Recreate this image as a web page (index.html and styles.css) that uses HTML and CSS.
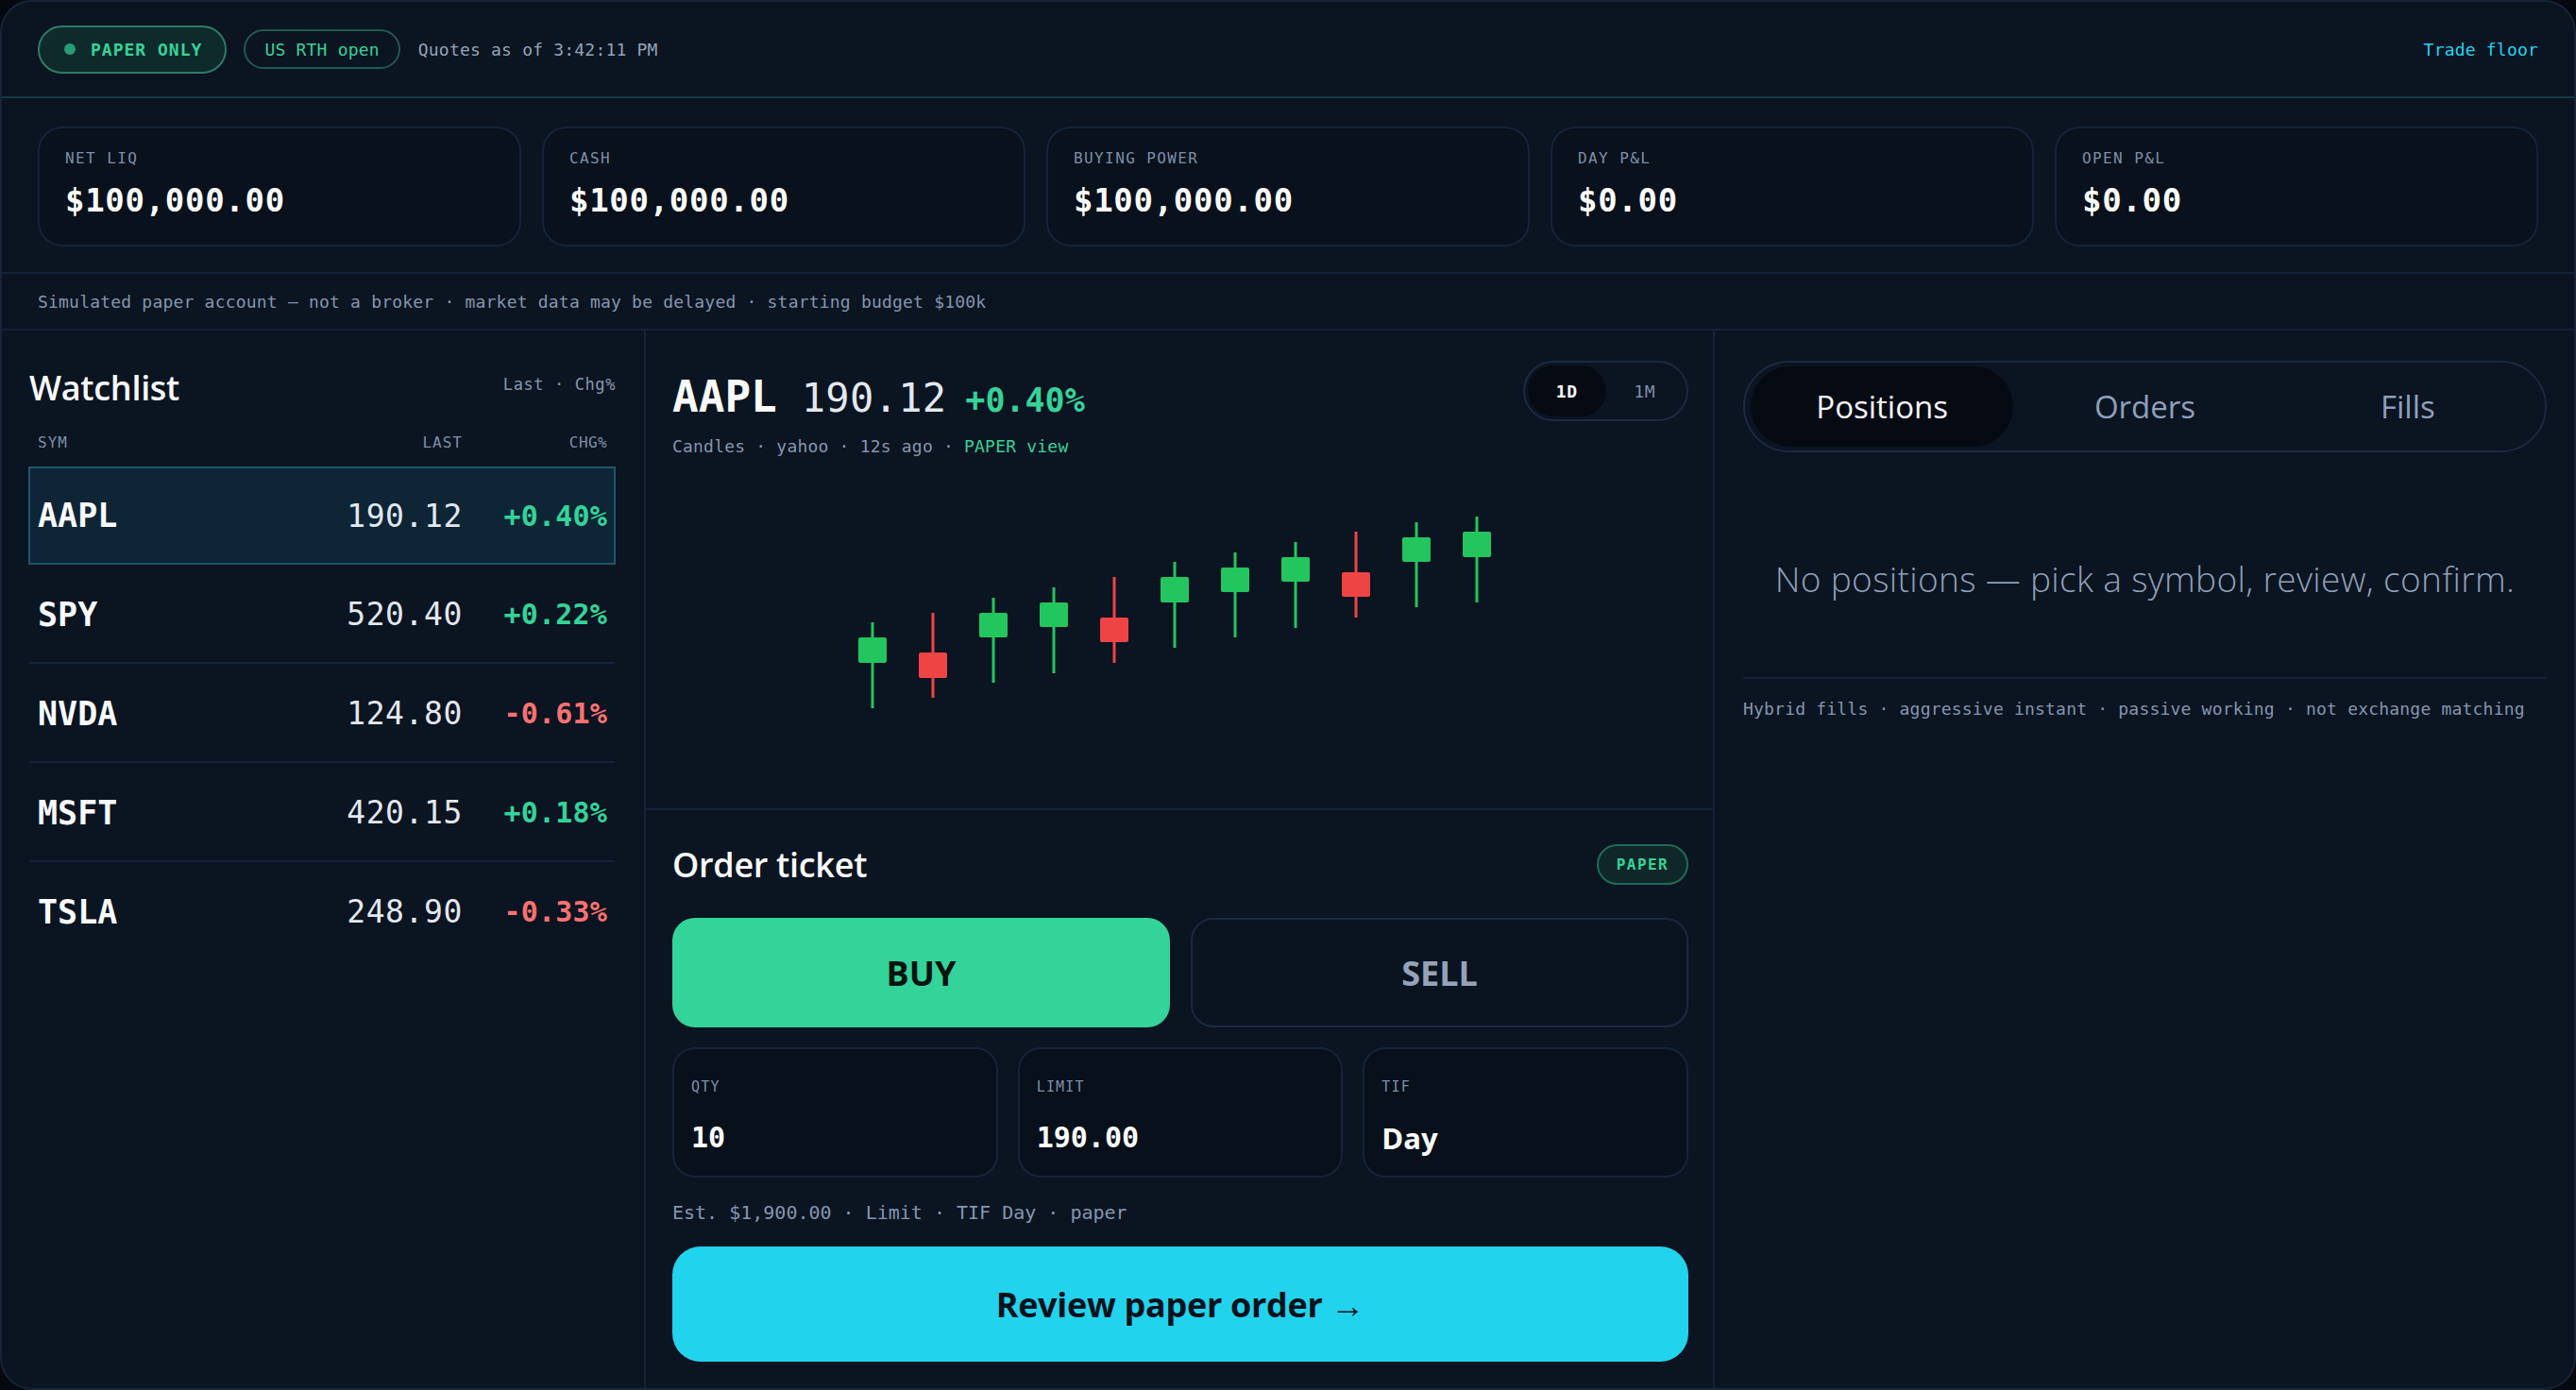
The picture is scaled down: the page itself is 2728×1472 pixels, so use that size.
FILE: index.html
```html
<!DOCTYPE html>
<html lang="en">
<head>
<meta charset="utf-8">
<title>Trade floor — paper desk</title>
<link rel="stylesheet" href="styles.css">
</head>
<body>
<div class="frame">
  <header class="topbar">
    <div class="topbar-left">
      <span class="pill pill-paper"><span class="pill-dot"></span>PAPER ONLY</span>
      <span class="pill pill-session">US RTH open</span>
      <span class="asof">Quotes as of 3:42:11 PM</span>
    </div>
    <a class="floor-link" href="#">Trade floor</a>
  </header>

  <section class="kpis">
    <div class="kpi"><div class="kpi-label">NET LIQ</div><div class="kpi-value">$100,000.00</div></div>
    <div class="kpi"><div class="kpi-label">CASH</div><div class="kpi-value">$100,000.00</div></div>
    <div class="kpi"><div class="kpi-label">BUYING POWER</div><div class="kpi-value">$100,000.00</div></div>
    <div class="kpi"><div class="kpi-label">DAY P&amp;L</div><div class="kpi-value">$0.00</div></div>
    <div class="kpi"><div class="kpi-label">OPEN P&amp;L</div><div class="kpi-value">$0.00</div></div>
  </section>

  <div class="disclaimer">Simulated paper account — not a broker · market data may be delayed · starting budget $100k</div>

  <main class="desk">
    <aside class="watch">
      <div class="watch-head">
        <h2 class="panel-title">Watchlist</h2>
        <span class="watch-hint">Last · Chg%</span>
      </div>
      <div class="watch-cols">
        <span>SYM</span><span class="num">LAST</span><span class="num">CHG%</span>
      </div>
      <div class="watch-row is-active">
        <span class="sym">AAPL</span><span class="last">190.12</span><span class="chg up">+0.40%</span>
      </div>
      <div class="watch-row">
        <span class="sym">SPY</span><span class="last">520.40</span><span class="chg up">+0.22%</span>
      </div>
      <div class="watch-row">
        <span class="sym">NVDA</span><span class="last">124.80</span><span class="chg down">-0.61%</span>
      </div>
      <div class="watch-row">
        <span class="sym">MSFT</span><span class="last">420.15</span><span class="chg up">+0.18%</span>
      </div>
      <div class="watch-row last-row">
        <span class="sym">TSLA</span><span class="last">248.90</span><span class="chg down">-0.33%</span>
      </div>
    </aside>

    <section class="center">
      <div class="chart-panel">
        <div class="quote-row">
          <div class="quote">
            <span class="q-sym">AAPL</span><span class="q-last">190.12</span><span class="q-chg">+0.40%</span>
          </div>
          <div class="range">
            <button class="range-btn is-on">1D</button>
            <button class="range-btn">1M</button>
          </div>
        </div>
        <div class="chart-meta">Candles · yahoo · 12s ago · <span class="tag-green">PAPER view</span></div>
        <svg class="candles" width="1076" height="352" viewBox="712 492 1076 352">
          <g class="bull">
            <rect x="922.5" y="659" width="3" height="91"/><rect x="909" y="675" width="30" height="27" rx="2"/>
            <rect x="1050.5" y="633" width="3" height="90"/><rect x="1037" y="649" width="30" height="26" rx="2"/>
            <rect x="1114.5" y="622" width="3" height="91"/><rect x="1101" y="638" width="30" height="26" rx="2"/>
            <rect x="1242.5" y="595" width="3" height="91"/><rect x="1229" y="611" width="30" height="27" rx="2"/>
            <rect x="1306.5" y="585" width="3" height="90"/><rect x="1293" y="601" width="30" height="26" rx="2"/>
            <rect x="1370.5" y="574" width="3" height="91"/><rect x="1357" y="590" width="30" height="26" rx="2"/>
            <rect x="1498.5" y="553" width="3" height="90"/><rect x="1485" y="569" width="30" height="26" rx="2"/>
            <rect x="1562.5" y="547" width="3" height="91"/><rect x="1549" y="563" width="30" height="27" rx="2"/>
          </g>
          <g class="bear">
            <rect x="986.5" y="649" width="3" height="90"/><rect x="973" y="691" width="30" height="27" rx="2"/>
            <rect x="1178.5" y="611" width="3" height="91"/><rect x="1165" y="654" width="30" height="26" rx="2"/>
            <rect x="1434.5" y="563" width="3" height="91"/><rect x="1421" y="606" width="30" height="26" rx="2"/>
          </g>
        </svg>
      </div>

      <div class="ticket">
        <div class="ticket-head">
          <h2 class="panel-title">Order ticket</h2>
          <span class="badge-paper">PAPER</span>
        </div>
        <div class="side-row">
          <button class="side side-buy">BUY</button>
          <button class="side side-sell">SELL</button>
        </div>
        <div class="fields">
          <div class="field"><div class="field-label">QTY</div><div class="field-value">10</div></div>
          <div class="field"><div class="field-label">LIMIT</div><div class="field-value">190.00</div></div>
          <div class="field"><div class="field-label">TIF</div><div class="field-value field-sans">Day</div></div>
        </div>
        <div class="estimate">Est. $1,900.00 · Limit · TIF Day · paper</div>
        <button class="review">Review paper order →</button>
      </div>
    </section>

    <section class="blotter">
      <div class="tabs">
        <button class="tab is-on">Positions</button>
        <button class="tab">Orders</button>
        <button class="tab">Fills</button>
      </div>
      <p class="empty">No positions — pick a symbol, review, confirm.</p>
      <div class="blotter-rule"></div>
      <p class="fill-note">Hybrid fills · aggressive instant · passive working · not exchange matching</p>
    </section>
  </main>
</div>
</body>
</html>
```

FILE: styles.css
```css
* { box-sizing: border-box; }

html, body {
  margin: 0;
  padding: 0;
}

body {
  width: 2728px;
  height: 1472px;
  background: #05080e;
  font-family: "Open Sans", "Noto Sans", sans-serif;
  color: #e6edf6;
  overflow: hidden;
}

button {
  font: inherit;
  color: inherit;
  background: none;
  border: 0;
  padding: 0;
  cursor: pointer;
}

h2, p { margin: 0; }

.frame {
  width: 2728px;
  height: 1472px;
  border: 2px solid #182539;
  border-radius: 34px;
  background: #0b1421;
  overflow: hidden;
  display: flex;
  flex-direction: column;
}

/* ---------- top bar ---------- */
.topbar {
  flex: none;
  height: 102px;
  padding: 0 38px;
  display: flex;
  align-items: center;
  justify-content: space-between;
  border-bottom: 2px solid #173a42;
  font-family: "DejaVu Sans Mono", monospace;
  font-size: 18px;
  letter-spacing: 0.2px;
}

.topbar-left {
  display: flex;
  align-items: center;
}

.pill {
  display: inline-flex;
  align-items: center;
  border-radius: 999px;
  color: #34d399;
  white-space: nowrap;
}

.pill-paper {
  height: 51px;
  padding: 0 24px 0 26px;
  border: 2px solid #2b7d66;
  background: #0f2a2b;
  font-weight: 700;
  letter-spacing: 1px;
}

.pill-dot {
  width: 12px;
  height: 12px;
  border-radius: 50%;
  background: #2a9b77;
  margin-right: 16px;
}

.pill-session {
  height: 42px;
  margin-left: 18px;
  padding: 0 20px;
  border: 2px solid #1f5a4f;
}

.asof {
  margin-left: 19px;
  color: #94a3b8;
}

.floor-link {
  color: #22d3ee;
  text-decoration: none;
}

/* ---------- account figures ---------- */
.kpis {
  flex: none;
  display: grid;
  grid-template-columns: repeat(5, 1fr);
  gap: 22px;
  padding: 30px 38px 27px;
  border-bottom: 2px solid #15223a;
}

.kpi {
  height: 127px;
  padding: 22px 27px 0;
  border: 2px solid #16233a;
  border-radius: 26px;
  background: #08111c;
  font-family: "DejaVu Sans Mono", monospace;
}

.kpi-label {
  font-size: 16px;
  line-height: 19px;
  letter-spacing: 1.4px;
  color: #7e8fa8;
}

.kpi-value {
  margin-top: 15px;
  font-size: 34px;
  line-height: 40px;
  font-weight: 700;
  letter-spacing: 0.7px;
  color: #ffffff;
}

.disclaimer {
  flex: none;
  height: 60px;
  padding: 0 38px;
  display: flex;
  align-items: center;
  border-bottom: 2px solid #15223a;
  font-family: "DejaVu Sans Mono", monospace;
  font-size: 18px;
  letter-spacing: 0.2px;
  color: #8596ae;
}

/* ---------- desk ---------- */
.desk {
  flex: 1;
  display: grid;
  grid-template-columns: 682px 1132px 1fr;
  min-height: 0;
}

.panel-title {
  font-size: 36px;
  line-height: 46px;
  font-weight: 600;
  color: #f8fafc;
  letter-spacing: -0.3px;
}

/* watchlist */
.watch {
  padding: 38px 30px 0 28px;
  border-right: 2px solid #15223a;
}

.watch-head {
  display: flex;
  align-items: center;
  justify-content: space-between;
  padding-left: 1px;
}

.watch-hint {
  font-family: "DejaVu Sans Mono", monospace;
  font-size: 17px;
  letter-spacing: 0.6px;
  color: #8596ae;
  margin-top: -8px;
}

.watch-cols {
  margin-top: 25px;
  display: grid;
  grid-template-columns: 1fr 200px 153px;
  padding: 0 9px 0 10px;
  font-family: "DejaVu Sans Mono", monospace;
  font-size: 16px;
  line-height: 20px;
  letter-spacing: 1px;
  color: #7e8fa8;
}

.num { text-align: right; }

.watch-cols .num:last-child { letter-spacing: 0.4px; }

.watch-cols + .watch-row { margin-top: 15px; }

.watch-row {
  height: 105px;
  display: grid;
  grid-template-columns: 1fr 200px 153px;
  align-items: center;
  padding: 0 7px 0 8px;
  border: 2px solid transparent;
  border-bottom-color: #15223a;
  font-family: "DejaVu Sans Mono", monospace;
}

.watch-row.is-active {
  height: 104px;
  background: #0e2536;
  border-color: #1f5568;
}

.watch-row.last-row { border-bottom-color: transparent; }

.sym {
  font-size: 35px;
  font-weight: 700;
  color: #f8fafc;
}

.last {
  text-align: right;
  font-size: 33px;
  letter-spacing: 0.6px;
  color: #e2e8f0;
}

.chg {
  text-align: right;
  font-size: 30px;
  font-weight: 700;
  letter-spacing: 0.2px;
}

.up { color: #34d399; }
.down { color: #f87171; }

/* center column */
.center {
  display: flex;
  flex-direction: column;
  border-right: 2px solid #15223a;
  min-height: 0;
}

.chart-panel {
  flex: none;
  height: 508px;
  padding: 32px 26px 0 28px;
  border-bottom: 2px solid #15223a;
}

.quote-row {
  height: 64px;
  display: flex;
  justify-content: space-between;
  align-items: flex-start;
}

.quote {
  margin-top: 10px;
  font-family: "DejaVu Sans Mono", monospace;
  line-height: 56px;
  white-space: nowrap;
}

.q-sym {
  font-size: 46px;
  font-weight: 700;
  color: #f8fafc;
}

.q-last {
  margin-left: 26px;
  font-size: 42px;
  letter-spacing: 0.3px;
  color: #e2e8f0;
}

.q-chg {
  margin-left: 20px;
  font-size: 35px;
  font-weight: 700;
  color: #34d399;
}

.range {
  width: 175px;
  height: 64px;
  padding: 3px;
  display: grid;
  grid-template-columns: 1fr 1fr;
  border: 2px solid #1b2a41;
  border-radius: 999px;
}

.range-btn {
  border-radius: 999px;
  font-family: "DejaVu Sans Mono", monospace;
  font-size: 18px;
  letter-spacing: 0.6px;
  color: #7e8fa8;
}

.range-btn.is-on {
  background: #060b13;
  color: #ffffff;
  font-weight: 700;
}

.chart-meta {
  margin-top: 16px;
  font-family: "DejaVu Sans Mono", monospace;
  font-size: 18px;
  line-height: 22px;
  letter-spacing: 0.2px;
  color: #8596ae;
}

.tag-green { color: #34d399; }

.candles {
  display: block;
  margin-top: 8px;
}

.bull rect { fill: #22c55e; }
.bear rect { fill: #ef4444; }

/* order ticket */
.ticket {
  flex: 1;
  padding: 36px 26px 0 28px;
}

.ticket-head {
  height: 43px;
  display: flex;
  align-items: center;
  justify-content: space-between;
}

.badge-paper {
  height: 43px;
  padding: 0 19px;
  display: inline-flex;
  align-items: center;
  border: 2px solid #1f6b58;
  border-radius: 999px;
  background: #0f2729;
  font-family: "DejaVu Sans Mono", monospace;
  font-size: 16px;
  font-weight: 700;
  letter-spacing: 1.4px;
  color: #34d399;
}

.side-row {
  margin-top: 35px;
  display: grid;
  grid-template-columns: 1fr 1fr;
  gap: 22px;
}

.side {
  height: 116px;
  border-radius: 24px;
  font-size: 36px;
  font-weight: 700;
}

.side-buy {
  background: #34d399;
  color: #03140f;
}

.side-sell {
  border: 2px solid #1b2a41;
  background: #0a1320;
  color: #94a3b8;
}

.fields {
  margin-top: 21px;
  display: grid;
  grid-template-columns: repeat(3, 1fr);
  gap: 21px;
}

.field {
  height: 138px;
  padding: 32px 18px 0;
  border: 2px solid #16233a;
  border-radius: 24px;
  background: #08101b;
}

.field-label {
  font-family: "DejaVu Sans Mono", monospace;
  font-size: 15px;
  line-height: 16px;
  letter-spacing: 1.2px;
  color: #7e8fa8;
}

.field-value {
  margin-top: 28px;
  font-family: "DejaVu Sans Mono", monospace;
  font-size: 30px;
  line-height: 36px;
  font-weight: 700;
  color: #ffffff;
}

.field-value.field-sans {
  font-family: "Open Sans", "Noto Sans", sans-serif;
  font-size: 31px;
}

.estimate {
  margin-top: 25px;
  font-family: "DejaVu Sans Mono", monospace;
  font-size: 20px;
  line-height: 24px;
  color: #8596ae;
}

.review {
  margin-top: 24px;
  width: 100%;
  height: 122px;
  border-radius: 30px;
  background: #22d3ee;
  color: #04121c;
  font-size: 36px;
  font-weight: 700;
  letter-spacing: -0.3px;
}

/* positions / orders / fills */
.blotter {
  padding: 32px 29px 0 30px;
}

.tabs {
  height: 97px;
  padding: 4px 6px;
  display: grid;
  grid-template-columns: repeat(3, 1fr);
  border: 2px solid #1b2a41;
  border-radius: 999px;
}

.tab {
  border-radius: 999px;
  font-size: 33px;
  font-weight: 500;
  color: #8ea0bb;
}

.tab.is-on {
  background: #060b13;
  color: #f8fafc;
}

.empty {
  margin-top: 112px;
  text-align: center;
  font-size: 37px;
  line-height: 44px;
  font-weight: 300;
  letter-spacing: 0.35px;
  color: #8fa0b8;
}

.blotter-rule {
  margin-top: 82px;
  height: 2px;
  background: #15223a;
}

.fill-note {
  margin-top: 21px;
  font-family: "DejaVu Sans Mono", monospace;
  font-size: 18px;
  line-height: 22px;
  letter-spacing: 0.2px;
  color: #8596ae;
}
```
